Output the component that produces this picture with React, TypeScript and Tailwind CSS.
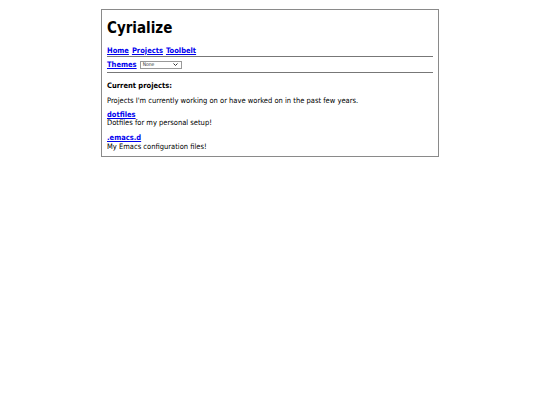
export default function App() {
  return (
    <div className="min-h-screen bg-white pt-[9px] font-['DejaVu_Sans_Condensed','DejaVu_Sans',sans-serif] text-black">
      <div className="mx-auto w-[338px] border border-[#8a8a8a] px-[5px] pb-[5px]">
        <h1 className="mt-[11px] mb-[10px] text-[15px] font-bold leading-none">Cyrialize</h1>
        <nav className="flex gap-[3px] text-[7.5px] font-bold leading-[9px]">
          <a href="#" className="text-[#0000ee] underline">Home</a>
          <a href="#" className="text-[#0000ee] underline">Projects</a>
          <a href="#" className="text-[#0000ee] underline">Toolbelt</a>
        </nav>
        <hr className="mt-[1px] border-t border-[#777]" />
        <div className="mt-[3px] flex items-center gap-[3px] text-[7.5px] leading-[9px]">
          <a href="#" className="font-bold text-[#0000ee] underline">Themes</a>
          <div className="flex h-[8px] w-[42px] items-center justify-between border border-[#999] bg-white pl-[2px] pr-[3px]">
            <span className="text-[5px] leading-none text-[#333]">None</span>
            <svg className="h-[3px] w-[5px]" viewBox="0 0 5 3">
              <path d="M0.5 0.5 L2.5 2.5 L4.5 0.5" fill="none" stroke="#333" strokeWidth="1" />
            </svg>
          </div>
        </div>
        <hr className="mt-[3px] border-t border-[#777]" />
        <h2 className="mt-[8px] text-[7.5px] font-bold leading-[9px]">Current projects:</h2>
        <p className="mt-[6px] text-[7.5px] leading-[9px]">
          Projects I'm currently working on or have worked on in the past few years.
        </p>
        <div className="mt-[6px] text-[7.5px] leading-[8px]">
          <a href="#" className="font-bold text-[#0000ee] underline">dotfiles</a>
          <div>Dotfiles for my personal setup!</div>
        </div>
        <div className="mt-[6px] text-[7.5px] leading-[9px]">
          <a href="#" className="font-bold text-[#0000ee] underline">.emacs.d</a>
          <div>My Emacs configuration files!</div>
        </div>
      </div>
    </div>
  );
}
